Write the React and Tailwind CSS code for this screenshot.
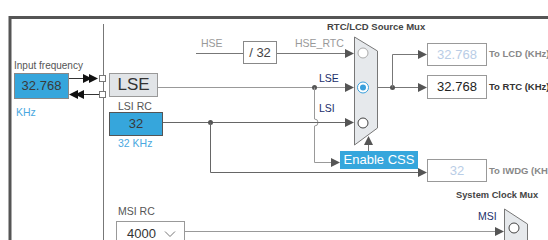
import React from "react";

const font = { fontFamily: '"Liberation Sans", Arial, sans-serif' };

// small filled arrowhead, tip at (x, y)
function Head({ x, y, dir = "right", fill = "#555" }) {
  let pts;
  if (dir === "right") pts = `${x},${y} ${x - 9},${y - 4.5} ${x - 9},${y + 4.5}`;
  if (dir === "left") pts = `${x},${y} ${x + 9},${y - 4.5} ${x + 9},${y + 4.5}`;
  if (dir === "up") pts = `${x},${y} ${x - 4.5},${y + 9} ${x + 4.5},${y + 9}`;
  return <polygon points={pts} fill={fill} />;
}

function Wires() {
  return (
    <svg width="548" height="240" className="absolute left-0 top-0">
      {/* frame */}
      <path d="M10 240 V17.5 H548" stroke="#555" strokeWidth="3" fill="none" />
      <line x1="103.5" y1="24" x2="103.5" y2="240" stroke="#777" />

      {/* input arrows */}
      <line x1="69" y1="78.5" x2="86" y2="78.5" stroke="#333" />
      <Head x={92} y={78.5} dir="right" fill="#111" />
      <Head x={98} y={78.5} dir="right" fill="#111" />
      <line x1="80" y1="94.5" x2="99" y2="94.5" stroke="#333" />
      <Head x={69} y={94.5} dir="left" fill="#111" />
      <Head x={75} y={94.5} dir="left" fill="#111" />
      <rect x="99.5" y="75.5" width="6" height="6" fill="#fff" stroke="#777" />
      <rect x="99.5" y="91.5" width="6" height="6" fill="#fff" stroke="#777" />

      {/* HSE -> /32 -> mux */}
      <line x1="196" y1="53.5" x2="243" y2="53.5" stroke="#777" />
      <line x1="277" y1="53.5" x2="346" y2="53.5" stroke="#777" />
      <Head x={354} y={53.5} />

      {/* LSE line */}
      <line x1="158" y1="87.5" x2="346" y2="87.5" stroke="#999" />
      <Head x={354} y={87.5} />
      <circle cx="314.5" cy="87.5" r="2.5" fill="#555" />
      <path d="M314.5 87.5 V119 a3.5 3.5 0 0 1 0 7 V162.5 H332" stroke="#999" fill="none" />
      <Head x={340} y={162.5} />

      {/* LSI line */}
      <line x1="163" y1="122.5" x2="346" y2="122.5" stroke="#666" />
      <Head x={354} y={122.5} />
      <circle cx="210.5" cy="122.5" r="2.5" fill="#555" />
      <path d="M210.5 122.5 V172.5 H419" stroke="#666" fill="none" />
      <Head x={427} y={172.5} />

      {/* RTC/LCD mux */}
      <polygon points="354.5,37 377.5,51 377.5,128 354.5,145" fill="#e6e9ec" stroke="#777" />
      <circle cx="363" cy="53" r="5" fill="#fff" stroke="#aaa" />
      <circle cx="363" cy="87.5" r="5.5" fill="#fff" stroke="#3aa0dc" />
      <circle cx="363" cy="87.5" r="3" fill="#3aa0dc" />
      <circle cx="363" cy="123" r="5" fill="#fff" stroke="#444" />

      {/* CSS enable arrow into mux */}
      <line x1="368.5" y1="151" x2="368.5" y2="142" stroke="#777" />
      <Head x={368.5} y={136} dir="up" />

      {/* mux outputs */}
      <line x1="377" y1="87.5" x2="419" y2="87.5" stroke="#777" />
      <circle cx="392.5" cy="87.5" r="2.5" fill="#555" />
      <path d="M392.5 87.5 V54.5 H419" stroke="#777" fill="none" />
      <Head x={427} y={54.5} />
      <Head x={427} y={87.5} />

      {/* MSI -> system clock mux */}
      <line x1="185" y1="231.5" x2="496" y2="231.5" stroke="#999" />
      <Head x={504} y={231.5} />
      <polygon points="504.5,209 527.5,224 527.5,250 504.5,250" fill="#e6e9ec" stroke="#777" />
      <circle cx="514" cy="228" r="5" fill="#fff" stroke="#444" />
    </svg>
  );
}

export default function App() {
  return (
    <div className="relative w-[548px] h-[240px] bg-white overflow-hidden" style={font}>
      <Wires />

      {/* input frequency */}
      <div className="absolute left-[14px] top-[61px] text-[10px] leading-none text-[#555]">
        Input frequency
      </div>
      <div className="absolute left-[14px] top-[73px] w-[55px] h-[26px] bg-[#36a6dc] border border-[#888] flex items-center justify-center text-[13px] text-[#3a3a3a]">
        32.768
      </div>
      <div className="absolute left-[16px] top-[107px] text-[10.5px] leading-none text-[#4aa8e0]">
        KHz
      </div>

      {/* LSE */}
      <div className="absolute left-[109px] top-[73px] w-[49px] h-[24px] bg-[#e1e4e7] border border-[#999] flex items-center justify-center text-[17px] text-[#333]">
        LSE
      </div>

      {/* LSI RC */}
      <div className="absolute left-[118px] top-[101px] text-[10.5px] leading-none text-[#555]">
        LSI RC
      </div>
      <div className="absolute left-[109px] top-[112px] w-[54px] h-[24px] bg-[#36a6dc] border border-[#555] flex items-center justify-center text-[13px] text-[#3a3a3a]">
        32
      </div>
      <div className="absolute left-[118px] top-[138px] text-[10.5px] leading-none text-[#4aa8e0]">
        32 KHz
      </div>

      {/* HSE divider */}
      <div className="absolute left-[201px] top-[38px] text-[10.5px] leading-none text-[#999]">HSE</div>
      <div className="absolute left-[243px] top-[41px] w-[34px] h-[23px] border border-[#888] bg-white flex items-center justify-center text-[13px] text-[#444]">
        / 32
      </div>
      <div className="absolute left-[295px] top-[38px] text-[10.5px] leading-none text-[#999]">HSE_RTC</div>

      <div className="absolute left-[319px] top-[73px] text-[10.5px] leading-none text-[#1c2f6b]">LSE</div>
      <div className="absolute left-[319px] top-[103px] text-[10.5px] leading-none text-[#1c2f6b]">LSI</div>

      <div className="absolute left-[327px] top-[22px] text-[9.5px] leading-none font-bold text-[#444] whitespace-nowrap">
        RTC/LCD Source Mux
      </div>

      {/* outputs */}
      <div className="absolute left-[427px] top-[43px] w-[60px] h-[23px] border border-[#999] bg-white flex items-center justify-center text-[13px] text-[#b9cde6]">
        32.768
      </div>
      <div className="absolute left-[489px] top-[49px] text-[9.5px] leading-none font-bold text-[#888] whitespace-nowrap">
        To LCD (KHz)
      </div>
      <div className="absolute left-[427px] top-[75px] w-[60px] h-[24px] border border-[#999] bg-white flex items-center justify-center text-[13px] text-[#222]">
        32.768
      </div>
      <div className="absolute left-[489px] top-[82px] text-[9.5px] leading-none font-bold text-[#333] whitespace-nowrap">
        To RTC (KHz)
      </div>

      <div className="absolute left-[340px] top-[151px] w-[78px] h-[18px] bg-[#36a6dc] flex items-center justify-center text-[13px] text-white whitespace-nowrap">
        Enable CSS
      </div>

      <div className="absolute left-[427px] top-[159px] w-[60px] h-[23px] border border-[#999] bg-white flex items-center justify-center text-[13px] text-[#b9cde6]">
        32
      </div>
      <div className="absolute left-[489px] top-[166px] text-[9.5px] leading-none font-bold text-[#888] whitespace-nowrap">
        To IWDG (KHz)
      </div>

      <div className="absolute left-[456px] top-[191px] text-[9.3px] leading-none font-bold text-[#444] whitespace-nowrap">
        System Clock Mux
      </div>
      <div className="absolute left-[478px] top-[211px] text-[10.5px] leading-none text-[#1c2f6b]">MSI</div>

      {/* MSI RC */}
      <div className="absolute left-[118px] top-[206px] text-[10.5px] leading-none text-[#555]">
        MSI RC
      </div>
      <div className="absolute left-[116px] top-[221px] w-[69px] h-[26px] border border-[#999] bg-white flex items-center justify-between pl-[10px] pr-[8px] text-[13px] text-[#333]">
        <span>4000</span>
        <svg width="12" height="8" viewBox="0 0 12 8">
          <path d="M1 1.5 L6 6.5 L11 1.5" stroke="#777" fill="none" />
        </svg>
      </div>
    </div>
  );
}
